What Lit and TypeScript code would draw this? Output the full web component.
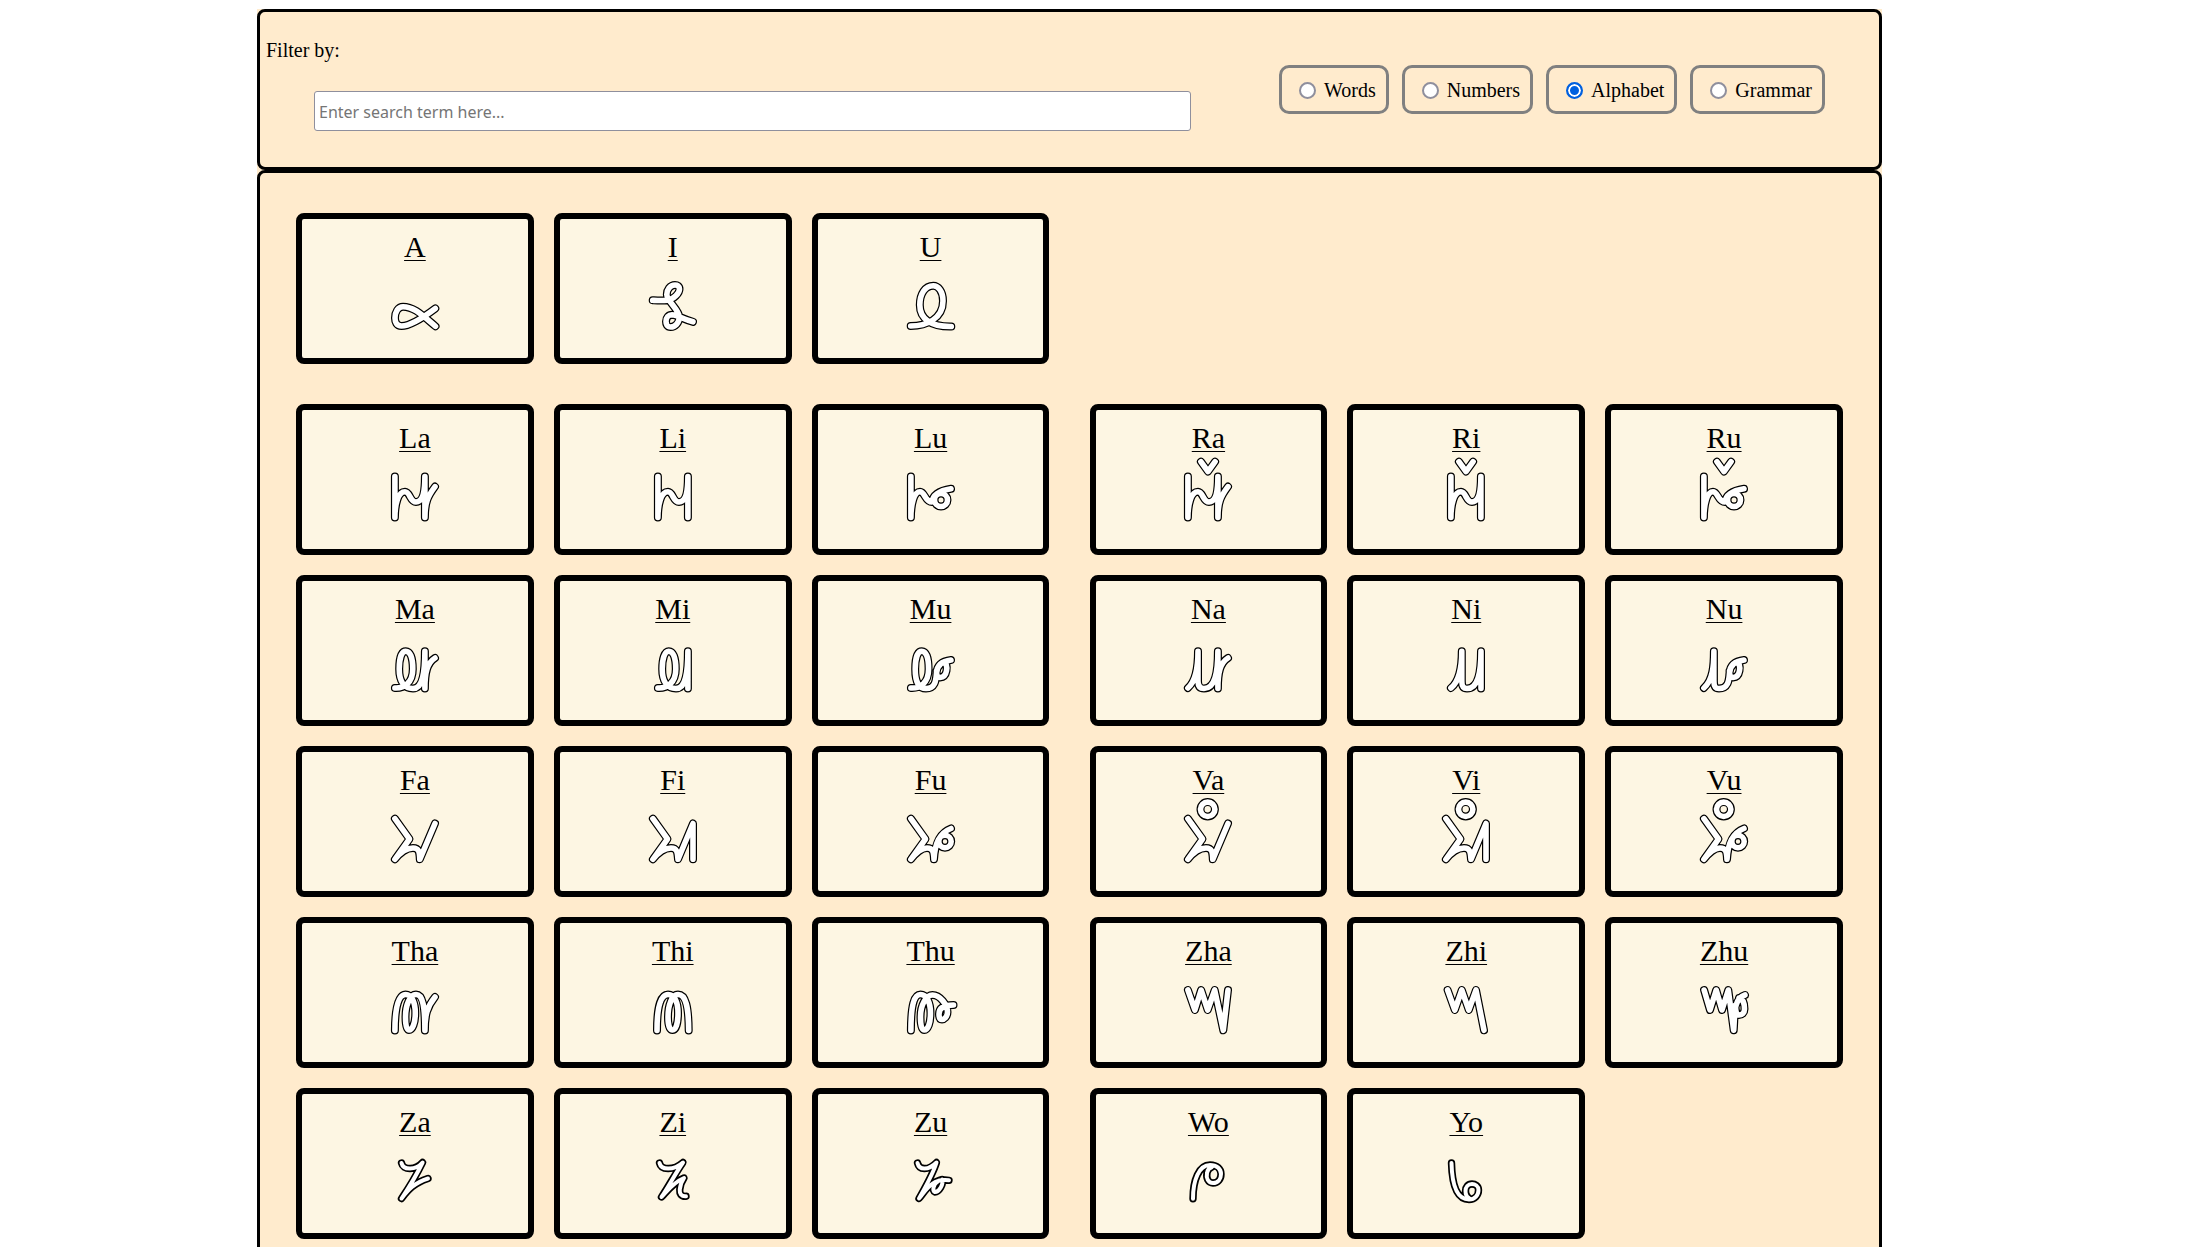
import { LitElement, html, css, svg } from "lit";
import { customElement, property, state } from "lit/decorators.js";

interface Glyph {
  name: string;
  path: string;
  fine?: boolean;
}

interface GlyphRow {
  left: Glyph[];
  right: Glyph[];
}

const CARON = "M17.9 -10.3L25 -0.5L32.1 -10.3";
const RING = "M17.5 -4.7A7.2 7.2 0 1 0 31.9 -4.7A7.2 7.2 0 1 0 17.5 -4.7";

const LA = "M4.9 4.5V45.5C5 32 8 19.8 15 19.8C20 19.8 20 30 26 30C34 30 34.9 15 34.9 4.5V45.5C34.9 30 38 24 45 14.6";
const LI = "M9.9 4.5V45.5C10 32 13 19.8 20 19.8C25 19.8 25 30 31 30C39 30 39.9 15 39.9 4.5V45.5";
const LU = "M4.9 4.5V45.5C5 32 8 19.8 14 19.8C19 19.8 19 30 26 30C27 22 34 18.5 45 16.8M28.5 28A6.5 6.5 0 1 0 41.5 28A6.5 6.5 0 1 0 28.5 28";
const FA = "M4.9 4.7L19.5 25L4.9 45.3C10 39 17 34 23 34C29 34 29.5 38 29.8 45.3L45 9.5";
const FI = "M4.9 4.7L19.5 25L4.9 45.3C10 39 17 34 23 34C29 34 29.5 38 30 45.3L45 9.5V45.3";
const FU = "M4.9 4.7L19.5 25L4.9 45.3C10 39 15 34 21 34C27 34 27.7 38 28 45.3C29 30 33 19 45 14.5M32.8 27.5A6.2 6.2 0 1 0 45.2 27.5A6.2 6.2 0 1 0 32.8 27.5";

const ROWS: GlyphRow[] = [
  {
    left: [
      { name: "A", path: "M45.3 27.5C38 33 22 45 11.5 45C6.5 45 5 41 5 37C5 31 8 25.7 13 25.7C24 25.7 32 34 45.5 45.3" },
      { name: "I", path: "M4.7 19.3C9 19.5 14 19.8 19 19.3C26 18.5 31.5 12 31.5 8C31.5 5 29.5 4 27 4C22 4 18.8 9 18.8 13.5C18.8 20 31.3 29 31.3 36C31.3 42 27 46 22.7 46C19 46 18 43 18 40.5C18 36.5 20.5 33.8 24 33.8C30 34 34 38 45 40.8" },
      { name: "U", path: "M4.7 45C20 45 37 38 37 20C37 10 32 4.8 27.3 4.8C19 4.8 13.8 13 13.8 24C13.8 38 25 45.8 45.3 45.5" },
    ],
    right: [],
  },
  {
    left: [
      { name: "La", path: LA },
      { name: "Li", path: LI },
      { name: "Lu", path: LU },
    ],
    right: [
      { name: "Ra", path: LA + CARON },
      { name: "Ri", path: LI + CARON },
      { name: "Ru", path: LU + CARON },
    ],
  },
  {
    left: [
      { name: "Ma", path: "M4.9 45C14 45.5 22.8 40 22.8 26C22.8 14 20 8.2 15.8 8.2C11.5 8.2 9.2 16 9.2 26C9.2 38 14 45.5 23 45.5C33 45.5 34.9 30 34.9 8.2V45.5C34.9 30 37 20 45 15" },
      { name: "Mi", path: "M9.9 45C19 45.5 27.8 40 27.8 26C27.8 14 25 8.2 20.8 8.2C16.5 8.2 14.2 16 14.2 26C14.2 38 19 45.5 28 45.5C38 45.5 39.9 30 39.9 8.2V45.5" },
      { name: "Mu", path: "M4.9 45C14 45.5 22.6 40 22.6 26C22.6 14 20 8.2 15.8 8.2C11.5 8.2 9.2 16 9.2 26C9.2 38 12 45.5 20 45.5C29 45.5 30 38 30.5 30C31 22 36 18 45 17M38 19C42.5 22 41.5 34 34 34.5C31 34.5 30.5 31 30.5 28" },
    ],
    right: [
      { name: "Na", path: "M4.9 45C14 37 15 22 15 8.2V38C15 43 17 45.5 21 45.5C32 45.5 34.9 30 34.9 8.2V45.5C34.9 30 37 20 45 15" },
      { name: "Ni", path: "M9.9 45C19.5 37 20.8 22 20.8 8.2V38C20.8 43 22 45.5 26 45.5C37 45.5 40 30 40 8.2V45.5" },
      { name: "Nu", path: "M4.9 45C14 37 14.9 22 14.9 8.2V38C14.9 43 16 45.5 20 45.5C29 45.5 30 38 30.5 30C31 22 36 18 45 17M38 19C42.5 22 41.5 34 34 34.5C31 34.5 30.5 31 30.5 28" },
    ],
  },
  {
    left: [
      { name: "Fa", path: FA },
      { name: "Fi", path: FI },
      { name: "Fu", path: FU },
    ],
    right: [
      { name: "Va", path: FA + RING },
      { name: "Vi", path: FI + RING },
      { name: "Vu", path: FU + RING },
    ],
  },
  {
    left: [
      { name: "Tha", path: "M4.9 45.5C5 20 9 9.5 15.5 9.5C22 9.5 25.3 18 25.3 28C25.3 38 22.5 45 19 45C16 45 15.5 38 15.5 32C15.5 20 20 9.5 26 9.5C33 9.5 34.9 22 34.9 45.5C34.9 30 37 22 45 12" },
      { name: "Thi", path: "M9 45.5C9 20 13 9.5 20 9.5C27 9.5 30 18 30 28C30 38 28 45 24.5 45C21 45 20 38 20 32C20 20 24 9.5 30 9.5C38 9.5 40.5 22 40.7 45.5" },
      { name: "Thu", path: "M4.9 45.5C5 20 8 9.5 14.5 9.5C21 9.5 24.5 18 24.5 28C24.5 38 22 45 18.3 45C15 45 14.5 38 14.5 32C14.5 20 20 10 26.5 10C34 10 41.5 20 41.5 27C41.5 32 38 34.5 36 34.5C33 34.5 33 31 33 29C33 22 40 20 47.5 20" },
    ],
    right: [
      { name: "Zha", path: "M4.9 5L11.9 25L18.1 5L24.7 25L31.7 5L40.3 45.3L45 5" },
      { name: "Zhi", path: "M6.6 5L13.8 25L20.8 5L27.8 25L35 5L43 45.3" },
      { name: "Zhu", path: "M5.1 5L11 25L17.2 5L23 25L29.3 5L34.7 45.3C36 30 34 14 46 10M40 13C44 14 45.5 18 45.5 24C45.5 28 43 30 40 30C37 30 36.5 25 36.5 20" },
    ],
  },
  {
    left: [
      { name: "Za", fine: true, path: "M11.5 7C13 14 25 15 32.6 6.5C27 18 20 30 11.5 42.5C18 34 24 27 38 22.5" },
      { name: "Zi", fine: true, path: "M11.5 7C13 14 25 15 35 6.5C27 18 21 30 13.5 41C20 34 26 26 36 22C32 28 28 41 38 40.3" },
      { name: "Zu", fine: true, path: "M11.5 7C13 14 22 15 30.5 6.5C27 18 20 30 13 42.5C20 34 26 22 43 24.3M36 23.5C38 28 33 36 29 36C26 35 27 28 33 24.5" },
    ],
    right: [
      { name: "Wo", fine: true, path: "M10 42.7C10 24 16 9 27 9C34 9 38 13 38 18C38 23 35 27 30 27C25 27 23 22 24 17C24.5 14 26 12 29 11" },
      { name: "Yo", fine: true, path: "M10.5 7C11 28 15 43.5 28 43.5C34 43.5 37.5 39 37.5 34C37.5 30 34 28 31 28C27 28 24.5 31 24.5 35C24.5 38 26 41 28 42" },
    ],
  },
];

const FILTERS = ["Words", "Numbers", "Alphabet", "Grammar"];

@customElement("glyph-card")
export class GlyphCard extends LitElement {
  @property({ attribute: false }) glyph!: Glyph;

  static styles = css`
    :host {
      display: block;
      box-sizing: border-box;
      border: 6px solid #000;
      border-radius: 8px;
      background: #fdf6e3;
      padding: 10px 0 27px;
      text-align: center;
    }
    .name {
      margin: 0 0 1px;
      font-size: 30px;
      font-weight: 400;
      line-height: 35px;
      text-decoration: underline;
      text-decoration-thickness: 1px;
      text-underline-offset: 3px;
    }
    .drawing {
      display: block;
      width: 50px;
      height: 66px;
      margin: 0 auto;
      overflow: visible;
    }
    .outline,
    .body {
      fill: none;
      stroke-linecap: round;
      stroke-linejoin: round;
    }
    .outline {
      stroke: #000;
      stroke-width: 8;
    }
    .body {
      stroke: #fff;
      stroke-width: 5.6;
    }
    .fine .outline {
      stroke-width: 7.4;
    }
    .fine .body {
      stroke-width: 4;
    }
  `;

  render() {
    const { name, path, fine } = this.glyph;
    return html`
      <h2 class="name">${name}</h2>
      <svg class="drawing ${fine ? "fine" : ""}" viewBox="0 -16 50 66" aria-hidden="true">
        ${svg`<path class="outline" d=${path} /><path class="body" d=${path} />`}
      </svg>
    `;
  }
}

@customElement("app-root")
export class AppRoot extends LitElement {
  @state() private selected = "Alphabet";

  static styles = css`
    :host {
      display: grid;
      grid-template-columns: 257fr 1625fr 316fr;
      align-items: start;
      box-sizing: border-box;
      height: 100vh;
      padding-top: 9px;
      overflow-y: auto;
      scrollbar-width: none;
      background: #fff;
      color: #000;
      font-family: "Liberation Serif", "Times New Roman", serif;
      font-size: 20px;
      line-height: 23px;
    }
    .page {
      grid-column: 2;
      background: #ffebcd;
    }
    .panel {
      border: 3px solid #000;
      border-radius: 8px;
    }
    .filter-bar {
      display: flex;
      align-items: center;
      gap: 88px;
      padding: 0 54px 0 6px;
    }
    .search {
      flex: 1;
      display: flex;
      flex-direction: column;
      gap: 29px;
      padding: 27px 0 36px;
    }
    .term {
      box-sizing: border-box;
      height: 40px;
      margin-left: 48px;
      padding: 2px 4px 0;
      border: 1px solid #8f8f9d;
      border-radius: 3px;
      background: #fff;
      color: #000;
      font-family: "Noto Sans", sans-serif;
      font-size: 16px;
    }
    .term::placeholder {
      color: #757575;
      opacity: 1;
    }
    .kinds {
      display: flex;
      gap: 13px;
      margin: 0;
      padding: 0;
      border: 0;
    }
    .kind {
      display: flex;
      align-items: center;
      gap: 8px;
      padding: 11px 10px 9px 17px;
      border: 3px solid #808080;
      border-radius: 10px;
    }
    .radio {
      appearance: none;
      box-sizing: border-box;
      width: 17px;
      height: 17px;
      margin: 0;
      border: 2px solid #8f8f9d;
      border-radius: 50%;
      background: #fff;
    }
    .radio:checked {
      border-color: #0060df;
      background: #0060df;
      box-shadow: inset 0 0 0 2px #fff;
    }
    .alphabet {
      display: grid;
      gap: 20px;
      padding: 40px 36px;
    }
    .row {
      display: grid;
      grid-template-columns: 1fr 1fr;
      gap: 40px;
    }
    .row:first-child {
      margin-bottom: 20px;
    }
    .group {
      display: grid;
      grid-template-columns: repeat(3, 1fr);
      gap: 20px;
    }
  `;

  private renderGroup(glyphs: Glyph[]) {
    return html`
      <div class="group">${glyphs.map((glyph) => html`<glyph-card .glyph=${glyph}></glyph-card>`)}</div>
    `;
  }

  render() {
    return html`
      <main class="page">
        <form class="panel filter-bar" @submit=${(e: Event) => e.preventDefault()}>
          <div class="search">
            <label for="term">Filter by:</label>
            <input id="term" class="term" type="text" placeholder="Enter search term here..." />
          </div>
          <fieldset class="kinds">
            ${FILTERS.map(
              (kind) => html`
                <label class="kind">
                  <input
                    class="radio"
                    type="radio"
                    name="kind"
                    value=${kind}
                    .checked=${this.selected === kind}
                    @change=${() => (this.selected = kind)}
                  />
                  <span>${kind}</span>
                </label>
              `
            )}
          </fieldset>
        </form>
        <section class="panel alphabet">
          ${ROWS.map((row) => html`<div class="row">${this.renderGroup(row.left)}${this.renderGroup(row.right)}</div>`)}
        </section>
      </main>
    `;
  }
}
